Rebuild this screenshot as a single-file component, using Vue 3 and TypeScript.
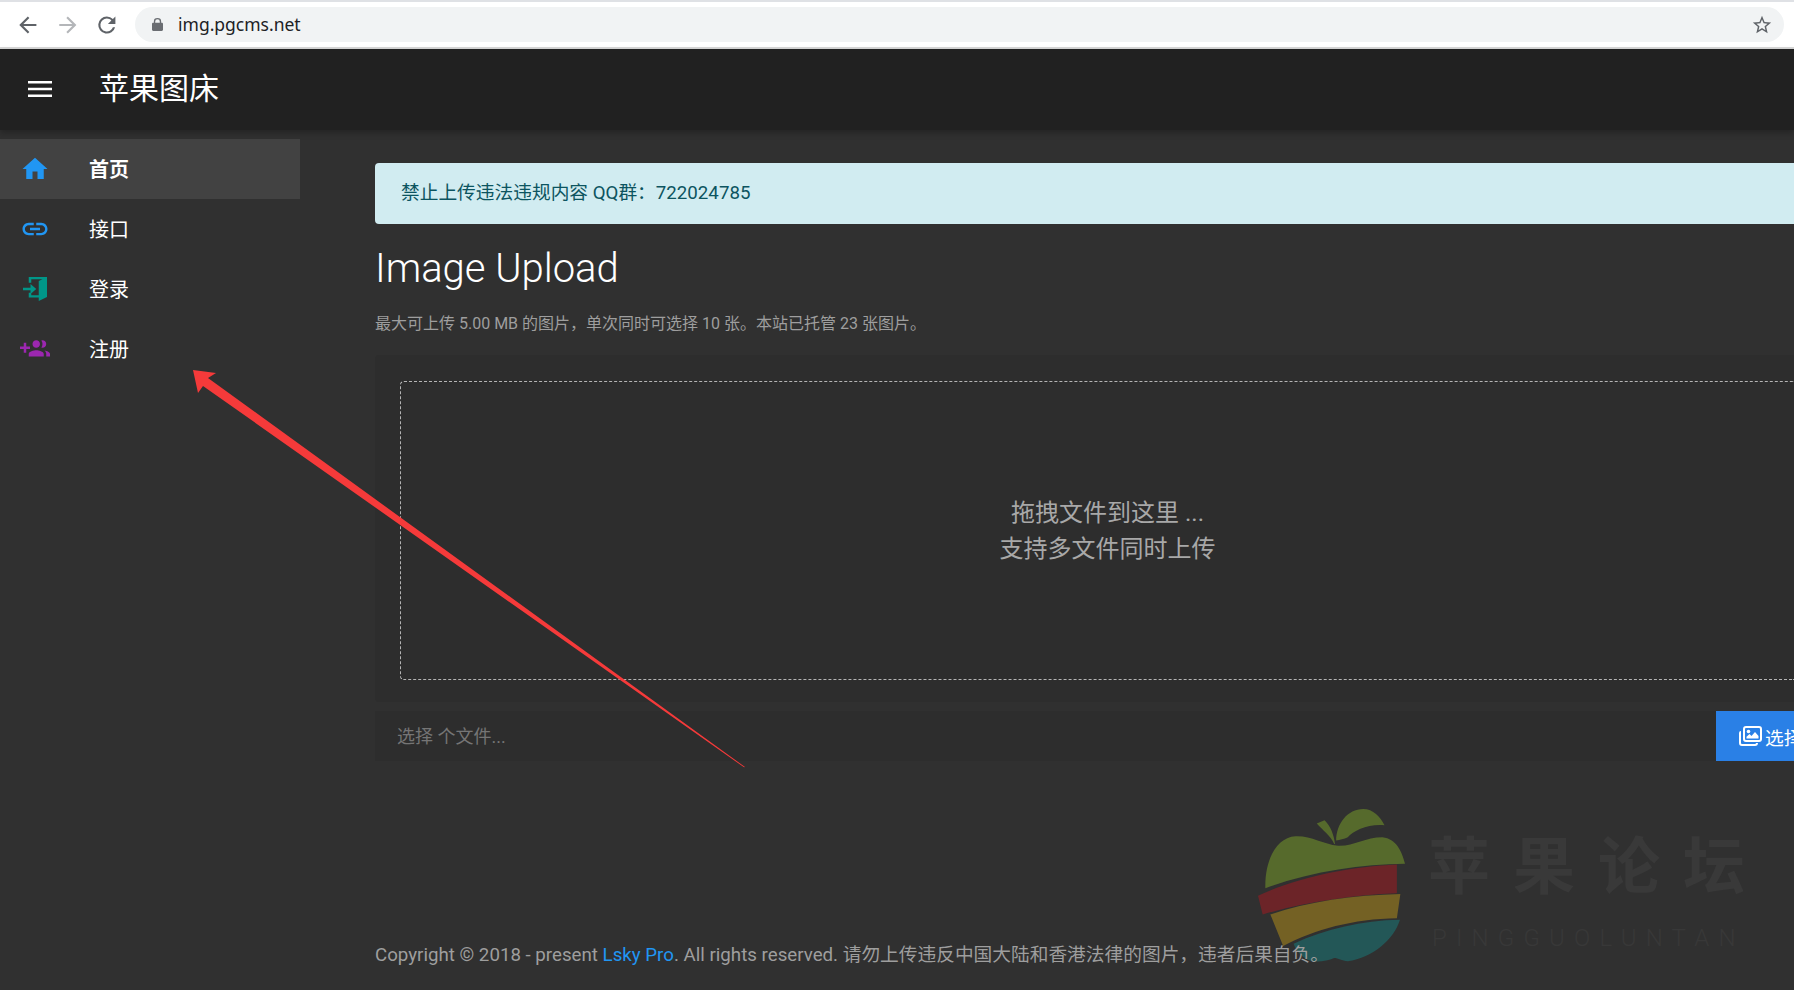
<script setup lang="ts">
interface NavItem {
  label: string;
  color: string;
  path: string;
  active?: boolean;
}

const nav: NavItem[] = [
  { label: '首页', color: '#2196f3', active: true, path: 'M10 20v-6h4v6h5v-8h3L12 3 2 12h3v8z' },
  { label: '接口', color: '#2196f3', path: 'M3.9 12c0-1.71 1.39-3.1 3.1-3.1h4V7H7c-2.76 0-5 2.24-5 5s2.24 5 5 5h4v-1.9H7c-1.71 0-3.1-1.39-3.1-3.1zM8 13h8v-2H8v2zm9-6h-4v1.9h4c1.71 0 3.1 1.39 3.1 3.1s-1.39 3.1-3.1 3.1h-4V17h4c2.76 0 5-2.24 5-5s-2.24-5-5-5z' },
  { label: '登录', color: '#009688', path: 'M2.4 11h6V8l4.600 4-4.600 4v-3h-6zM7 7V2.400h14.600v16L15 21.600v-2.800H7V15h2v2h6V5.500l3-1.300H9V7z' },
  { label: '注册', color: '#9c27b0', path: 'M8 10H5V7H3v3H0v2h3v3h2v-3h3v-2zm10 1c1.66 0 2.99-1.34 2.99-3S19.66 5 18 5c-.32 0-.63.05-.91.14.57.81.9 1.79.9 2.86s-.34 2.04-.9 2.86c.28.09.59.14.91.14zm-5 0c1.66 0 2.99-1.34 2.99-3S14.66 5 13 5s-3 1.34-3 3 1.34 3 3 3zm6.62 2.16c.83.73 1.38 1.66 1.38 2.84v2h3v-2c0-1.54-2.37-2.49-4.38-2.84zM13 13c-2 0-6 1-6 3v2h12v-2c0-2-4-3-6-3z' },
];
</script>

<template>
  <div class="page">
    <div class="chrome">
      <div class="chrome-btns">
        <svg class="cicon" viewBox="0 0 24 24"><path fill="#5f6368" d="M20 11H7.830l5.590-5.590L12 4l-8 8 8 8 1.410-1.410L7.830 13H20z" /></svg>
        <svg class="cicon" viewBox="0 0 24 24"><path fill="#b4b6b9" d="M12 4l-1.410 1.410L16.170 11H4v2h12.170l-5.580 5.590L12 20l8-8z" /></svg>
        <svg class="cicon" viewBox="0 0 24 24"><path fill="#5f6368" d="M17.650 6.350A7.950 7.950 0 0 0 12 4a8 8 0 1 0 7.730 10h-2.080A6 6 0 1 1 12 6c1.660 0 3.140.69 4.220 1.780L13 11h7V4l-2.350 2.350z" /></svg>
      </div>
      <div class="omnibox">
        <svg class="lock" viewBox="0 0 12 14"><path fill="#6a6d72" d="M2 5V3.600a4 3.600 0 0 1 8 0V5h.6c.8 0 1.400.6 1.400 1.300v6.400c0 .7-.6 1.300-1.400 1.300H1.400C.6 14 0 13.400 0 12.700V6.300C0 5.600.6 5 1.400 5zm1.500 0h5V3.600a2.500 2.300 0 0 0-5 0z" /></svg>
        <span class="url">img.pgcms.net</span>
        <svg class="star" viewBox="0 0 24 24"><path fill="#5f6368" d="M22 9.240l-7.190-.62L12 2 9.190 8.630 2 9.240l5.460 4.730L5.820 21 12 17.270 18.180 21l-1.630-7.030L22 9.240zM12 15.400l-3.760 2.270 1-4.280-3.320-2.880 4.380-.38L12 6.100l1.710 4.040 4.380.38-3.320 2.880 1 4.280L12 15.400z" /></svg>
      </div>
    </div>

    <header class="topbar">
      <svg class="menu" viewBox="0 0 24 16"><path fill="#fff" d="M0 0h24v2.600H0zM0 6.700h24v2.600H0zM0 13.400h24V16H0z" /></svg>
      <span class="brand">苹果图床</span>
    </header>

    <div class="body">
      <aside class="side">
        <a v-for="item in nav" :key="item.label" class="nav-item" :class="{ active: item.active }">
          <svg class="nav-icon" viewBox="0 0 24 24"><path :fill="item.color" :d="item.path" /></svg>
          <span class="nav-label">{{ item.label }}</span>
        </a>
      </aside>

      <main class="main">
        <div class="alert">禁止上传违法违规内容 QQ群：722024785</div>
        <h1 class="title">Image Upload</h1>
        <p class="hint">最大可上传 5.00 MB 的图片，单次同时可选择 10 张。本站已托管 23 张图片。</p>

        <section class="panel">
          <div class="drop">
            <div class="drop-text">拖拽文件到这里 ...<br />支持多文件同时上传</div>
          </div>
        </section>

        <div class="picker">
          <span class="placeholder">选择 个文件...</span>
          <button class="pick-btn">
            <svg class="pick-icon" viewBox="0 0 24 22">
              <path fill="#fff" fill-rule="evenodd" d="M8 1h13a3 3 0 0 1 3 3v10a3 3 0 0 1-3 3H8a3 3 0 0 1-3-3V4a3 3 0 0 1 3-3zm0 2a1 1 0 0 0-1 1v10a1 1 0 0 0 1 1h13a1 1 0 0 0 1-1V4a1 1 0 0 0-1-1z" />
              <path fill="#fff" d="M1 8v10a3 3 0 0 0 3 3h13a3 3 0 0 0 3-3h-2a1 1 0 0 1-1 1H4a1 1 0 0 1-1-1V6a2 2 0 0 0-2 2z" />
              <circle cx="10.500" cy="6.500" r="1.800" fill="#fff" />
              <path fill="#fff" d="M8.500 13.500v-1.700l3-2.800 2 2 3.500-4 3.500 4v2.500z" />
            </svg>
            <span>选择文件</span>
          </button>
        </div>

        <footer class="foot">Copyright © 2018 - present <a class="foot-link">Lsky Pro</a>. All rights reserved. 请勿上传违反中国大陆和香港法律的图片，违者后果自负。</footer>
      </main>
    </div>

    <svg class="arrow" viewBox="0 0 1794 990">
      <path fill="#f53a3a" d="M193 370l23 3-8 5 537 389-1 .3L203 386l-5 7z" />
    </svg>

    <div class="mark">
      <svg class="apple" viewBox="153 87 380 450" preserveAspectRatio="none">
        <path fill="#566a2c" d="M355 180C355 130 385 87 425 87C450 87 470 110 480 135C440 130 400 150 385 170C375 175 365 178 355 180Z" />
        <path fill="#566a2c" d="M350 190C340 165 320 150 305 130L325 120C340 135 350 165 352 190Z" />
        <path fill="#566a2c" d="M172 320C170 240 200 170 250 167C290 165 320 190 360 195C400 197 430 170 475 170C510 175 525 210 533 248C420 250 290 270 172 320Z" />
        <path fill="#6c2428" d="M153 342C250 290 390 255 512 250L512 335C400 340 280 360 165 397Z" />
        <path fill="#746124" d="M185 397C280 360 400 340 521 337L512 408C400 410 300 440 218 490Z" />
        <path fill="#235757" d="M245 483C330 440 420 415 520 413C505 470 450 525 385 535C370 533 360 525 350 525C330 535 300 540 280 530C265 520 250 500 245 483Z" />
      </svg>
      <div class="mark-text">
        <span class="mark-cn">苹果论坛</span>
        <span class="mark-en">PINGGUOLUNTAN</span>
      </div>
    </div>
  </div>
</template>

<style>
html, body { margin: 0; background: #303030; overflow: hidden; }
</style>

<style scoped>
.page {
  position: relative;
  width: 1794px;
  height: 990px;
  overflow: hidden;
  background: #303030;
  font-family: Roboto, "Noto Sans CJK SC", sans-serif;
}
.chrome {
  height: 45px;
  border-top: 2px solid #dfe1e5;
  border-bottom: 2px solid #d8d8d8;
  background: #fff;
  display: flex;
  align-items: center;
  padding-right: 10px;
}
.chrome-btns {
  display: flex;
  gap: 14px;
  padding-left: 15px;
  width: 120px;
  margin-right: 15px;
  box-sizing: border-box;
}
.cicon { width: 26px; height: 26px; }
.omnibox {
  flex: 1;
  height: 35px;
  border-radius: 18px;
  background: #f1f3f4;
  display: flex;
  align-items: center;
  padding: 0 11px 0 17px;
}
.lock { width: 11px; height: 13px; margin-right: 15px; }
.url { font-family: "Noto Sans", sans-serif; font-size: 17.500px; color: #202124; flex: 1; padding-bottom: 2px; }
.star { width: 22px; height: 22px; }
.topbar {
  height: 81px;
  background: #212121;
  box-shadow: 0 3px 6px rgba(0, 0, 0, .25);
  display: flex;
  align-items: center;
  position: relative;
  padding-bottom: 2px;
  box-sizing: border-box;
}
.menu { width: 24px; height: 16px; margin-left: 28px; margin-right: 47px; }
.brand { color: #fff; font-size: 30px; line-height: 1; }
.body { display: flex; height: 860px; }
.side { width: 300px; flex: none; padding-top: 9px; box-sizing: border-box; }
.nav-item {
  height: 60px;
  display: flex;
  align-items: center;
  color: #fff;
  font-size: 20px;
}
.nav-item.active { background: #424242; font-weight: 700; }
.nav-icon { width: 30px; height: 30px; margin-left: 20px; margin-right: 39px; flex: none; }
.nav-label { line-height: 24px; padding-top: 2px; }
.main { flex: 1; padding: 33px 0 0 75px; display: flex; flex-direction: column; min-width: 0; }
.alert {
  height: 61px;
  box-sizing: border-box;
  background: #d1ecf1;
  color: #0c5460;
  border-radius: 4px 0 0 4px;
  font-size: 18.720px;
  line-height: 60px;
  padding-left: 26px;
}
.title { margin: 21px 0 0; color: #fff; font-weight: 300; font-size: 40px; line-height: 48px; }
.hint { margin: 21px 0 0; color: #9e9e9e; font-size: 16px; line-height: 20px; }
.panel {
  margin-top: 21px;
  height: 347px;
  background: #2d2d2d;
  padding: 26px 0 22px 25px;
  box-sizing: border-box;
  border-radius: 4px 0 0 4px;
}
.drop {
  height: 100%;
  border: 1px dashed #b5b5b5;
  border-right: 0;
  border-radius: 4px 0 0 4px;
  display: flex;
  align-items: center;
  justify-content: center;
  box-sizing: border-box;
  padding-left: 20px;
}
.drop-text { color: #a8a8a8; font-size: 24px; line-height: 36px; text-align: center; }
.picker {
  margin-top: 9px;
  height: 50px;
  background: #2d2d2d;
  display: flex;
  align-items: center;
  justify-content: space-between;
  padding-left: 22px;
  overflow: hidden;
}
.placeholder { color: #757575; font-size: 18px; padding-bottom: 2px; }
.pick-btn {
  width: 78px;
  height: 50px;
  background: #2a80e6;
  border: 0;
  padding: 0 0 0 22px;
  color: #fff;
  font: 18.720px Roboto, "Noto Sans CJK SC", sans-serif;
  display: flex;
  align-items: center;
  white-space: nowrap;
  overflow: hidden;
  flex: none;
}
.pick-icon { width: 24px; height: 22px; margin-right: 3px; flex: none; }
.foot { margin-top: auto; margin-bottom: 23px; color: #9e9e9e; font-size: 18.720px; line-height: 24px; white-space: nowrap; position: relative; z-index: 2; }
.foot-link { color: #2196f3; }
.arrow { position: absolute; left: 0; top: 0; width: 1794px; height: 990px; pointer-events: none; }
.mark { position: absolute; left: 1258px; top: 809px; display: flex; }
.apple { width: 147px; height: 153px; flex: none; }
.mark-text { display: flex; flex-direction: column; margin-left: 23px; margin-top: 13px; }
.mark-cn { font-family: "Noto Sans CJK SC", sans-serif; font-size: 62px; line-height: 80px; letter-spacing: 23px; color: #393939; font-weight: 700; white-space: nowrap; }
.mark-en { font-size: 24px; line-height: 28px; margin-top: 22px; margin-left: 4px; letter-spacing: 9.200px; color: #383838; font-weight: 300; white-space: nowrap; }
</style>
